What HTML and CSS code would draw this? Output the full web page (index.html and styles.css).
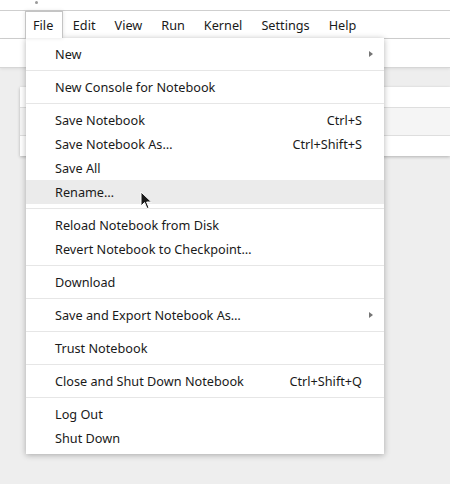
FILE: index.html
```html
<!DOCTYPE html>
<html>
<head>
<meta charset="utf-8">
<link rel="stylesheet" href="styles.css">
</head>
<body>
<div class="app">
  <div class="titlebar"><span class="dot"></span></div>
  <div class="menubar">
    <div class="mb-item active">File</div>
    <div class="mb-item">Edit</div>
    <div class="mb-item">View</div>
    <div class="mb-item">Run</div>
    <div class="mb-item">Kernel</div>
    <div class="mb-item">Settings</div>
    <div class="mb-item">Help</div>
  </div>
  <div class="toolbar"></div>
  <div class="main">
    <div class="card">
      <div class="row"></div>
      <div class="row alt"></div>
      <div class="row"></div>
    </div>
  </div>

  <div class="menu">
    <div class="item"><span class="label">New</span><span class="arrow"></span></div>
    <div class="sep"></div>
    <div class="item"><span class="label">New Console for Notebook</span></div>
    <div class="sep"></div>
    <div class="item"><span class="label">Save Notebook</span><span class="key">Ctrl+S</span></div>
    <div class="item"><span class="label">Save Notebook As…</span><span class="key">Ctrl+Shift+S</span></div>
    <div class="item"><span class="label">Save All</span></div>
    <div class="item hover"><span class="label">Rename…</span></div>
    <div class="sep"></div>
    <div class="item"><span class="label">Reload Notebook from Disk</span></div>
    <div class="item"><span class="label">Revert Notebook to Checkpoint…</span></div>
    <div class="sep"></div>
    <div class="item"><span class="label">Download</span></div>
    <div class="sep"></div>
    <div class="item"><span class="label">Save and Export Notebook As…</span><span class="arrow"></span></div>
    <div class="sep"></div>
    <div class="item"><span class="label">Trust Notebook</span></div>
    <div class="sep"></div>
    <div class="item"><span class="label">Close and Shut Down Notebook</span><span class="key">Ctrl+Shift+Q</span></div>
    <div class="sep"></div>
    <div class="item"><span class="label">Log Out</span></div>
    <div class="item"><span class="label">Shut Down</span></div>
  </div>

  <svg class="cursor" width="14" height="20" viewBox="0 0 14 20">
    <path d="M1 1 L1 15 L4.5 11.5 L7 17.5 L9 16.7 L6.6 11 L11.5 11 Z" fill="#1a1a1a" stroke="#ffffff" stroke-width="1"/>
  </svg>
</div>
</body>
</html>
```
FILE: styles.css
```css
html, body {
  margin: 0;
  padding: 0;
}
body {
  font-family: "Noto Sans", "DejaVu Sans", sans-serif;
  font-size: 12.7px;
  color: #1a1a1a;
  background: #eeeeee;
}
.app {
  position: relative;
  width: 450px;
  height: 484px;
  overflow: hidden;
  background: #eeeeee;
  display: flex;
  flex-direction: column;
}
.titlebar {
  height: 10px;
  background: #ffffff;
  border-bottom: 1px solid #cfcfcf;
  position: relative;
}
.dot {
  position: absolute;
  left: 35px;
  top: 1px;
  width: 3px;
  height: 3px;
  border-radius: 50%;
  background: #9a9a9a;
}
.menubar {
  height: 27px;
  background: #ffffff;
  border-bottom: 1px solid #cfcfcf;
  display: flex;
  align-items: stretch;
  padding-left: 26px;
}
.mb-item {
  display: flex;
  align-items: center;
  padding: 1px 9.5px 0 9.5px;
  line-height: 27px;
}
.mb-item.active {
  border: 1px solid #c4c4c4;
  border-bottom: none;
  padding: 1px 9px 0 7px;
  margin-left: -1px;
  box-shadow: 0 0 4px rgba(0,0,0,0.12);
  position: relative;
  z-index: 3;
  background: #ffffff;
}
.toolbar {
  height: 28px;
  background: #ffffff;
  border-bottom: 1px solid #d6d6d6;
  box-shadow: 0 1px 3px rgba(0,0,0,0.08);
}
.main {
  flex: 1;
  padding: 19px 0 0 20px;
}
.card {
  background: #ffffff;
  box-shadow: 0 1px 3px rgba(0,0,0,0.25);
  display: flex;
  flex-direction: column;
}
.row {
  height: 20px;
  border-bottom: 1px solid #dedede;
}
.row.alt {
  height: 27px;
  background: #f5f5f5;
}
.row:last-child {
  border-bottom: none;
}
.menu {
  position: absolute;
  left: 26px;
  top: 38px;
  width: 358px;
  padding: 4px 0;
  background: #ffffff;
  box-shadow: 0 1px 6px rgba(0,0,0,0.3);
  z-index: 2;
}
.item {
  height: 24px;
  display: flex;
  align-items: center;
  padding: 0 22px 0 29px;
  position: relative;
}
.item.hover {
  background: #ebebeb;
}
.label {
  flex: 1;
}
.arrow {
  position: absolute;
  right: 11px;
  top: 9px;
  width: 0;
  height: 0;
  border-top: 3px solid transparent;
  border-bottom: 3px solid transparent;
  border-left: 4px solid #757575;
}
.sep {
  height: 1px;
  margin: 4px 0;
  background: #e6e6e6;
}
.cursor {
  position: absolute;
  left: 140px;
  top: 191px;
  z-index: 5;
}
```
